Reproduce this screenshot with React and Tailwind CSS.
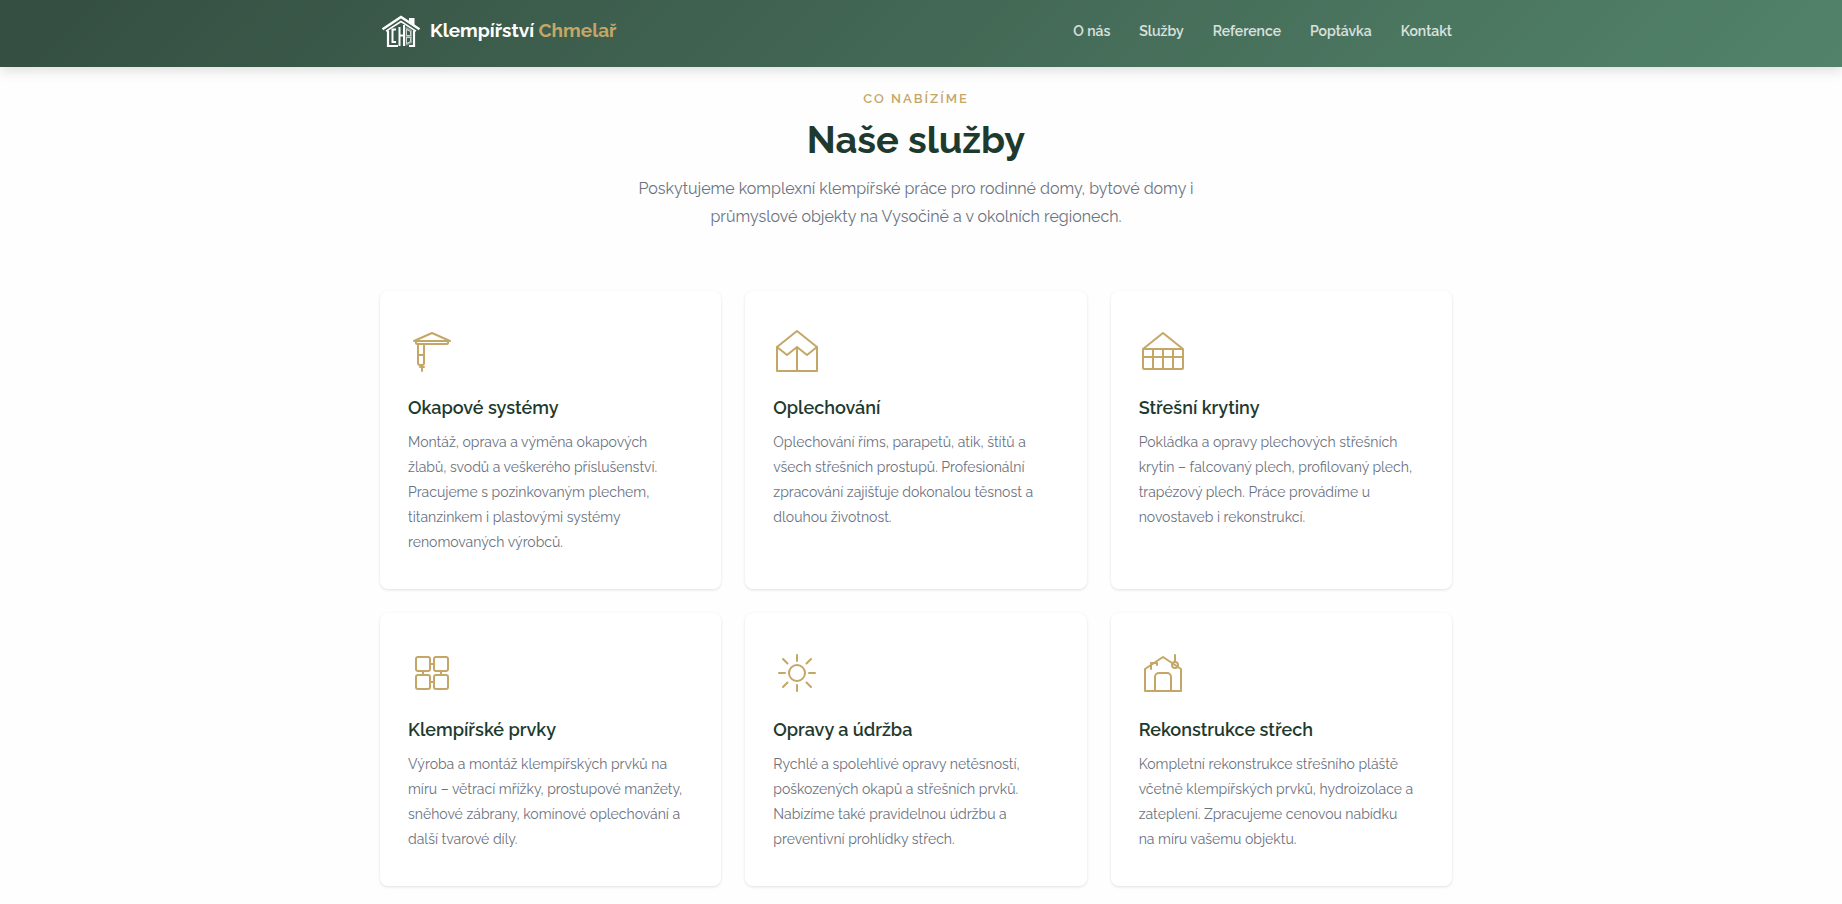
const NAV = [
  ["O nás", "#o-nas"],
  ["Služby", "#sluzby"],
  ["Reference", "#reference"],
  ["Poptávka", "#poptavka"],
  ["Kontakt", "#kontakt"],
];

const SERVICES = [
  {
    title: "Okapové systémy",
    text: "Montáž, oprava a výměna okapových žlabů, svodů a veškerého příslušenství. Pracujeme s pozinkovaným plechem, titanzinkem i plastovými systémy renomovaných výrobců.",
    icon: (
      <>
        <path d="M6 14 24 6 42 14Z" />
        <path d="M8 14v2a1 1 0 0 0 1 1h30a1 1 0 0 0 1-1v-2" />
        <path d="M10 17v19a2 2 0 0 0 2 2h2a2 2 0 0 0 2-2V17M10 28h6M14 38v6M12 40h4" />
      </>
    ),
  },
  {
    title: "Oplechování",
    text: "Oplechování říms, parapetů, atik, štítů a všech střešních prostupů. Profesionální zpracování zajišťuje dokonalou těsnost a dlouhou životnost.",
    icon: (
      <>
        <path d="M4 20 24 4 44 20V44H4Z" />
        <path d="M4 20 14 28 24 20 34 28 44 20M24 20V44" />
      </>
    ),
  },
  {
    title: "Střešní krytiny",
    text: "Pokládka a opravy plechových střešních krytin – falcovaný plech, profilovaný plech, trapézový plech. Práce provádíme u novostaveb i rekonstrukcí.",
    icon: (
      <>
        <path d="M4 22 24 6 44 22" />
        <rect x="4" y="22" width="40" height="20" rx="1" />
        <path d="M14 22v20M24 22v20M34 22v20M4 30h40" />
      </>
    ),
  },
  {
    title: "Klempířské prvky",
    text: "Výroba a montáž klempířských prvků na míru – větrací mřížky, prostupové manžety, sněhové zábrany, komínové oplechování a další tvarové díly.",
    icon: (
      <>
        <rect x="8" y="8" width="14" height="14" rx="2" />
        <rect x="26" y="8" width="14" height="14" rx="2" />
        <rect x="8" y="26" width="14" height="14" rx="2" />
        <rect x="26" y="26" width="14" height="14" rx="2" />
        <path d="M22 15h4M22 33h4M15 22v4M33 22v4" />
      </>
    ),
  },
  {
    title: "Opravy a údržba",
    text: "Rychlé a spolehlivé opravy netěsností, poškozených okapů a střešních prvků. Nabízíme také pravidelnou údržbu a preventivní prohlídky střech.",
    icon: (
      <>
        <circle cx="24" cy="24" r="8" />
        <path d="M24 6v6M24 36v6M6 24h6M36 24h6M10 10l4.500 4.500M33.500 33.500 38 38M38 10l-4.500 4.500M14.500 33.500 10 38" />
      </>
    ),
  },
  {
    title: "Rekonstrukce střech",
    text: "Kompletní rekonstrukce střešního pláště včetně klempířských prvků, hydroizolace a zateplení. Zpracujeme cenovou nabídku na míru vašemu objektu.",
    icon: (
      <>
        <path d="M6 20 24 8 42 20V42H6Z" />
        <path d="M16 42V28a4 4 0 0 1 4-4h8a4 4 0 0 1 4 4v14" />
        <path d="M12 20v-6h6v2M36 6v7" />
        <circle cx="36" cy="16" r="3" />
      </>
    ),
  },
];

function Logo() {
  return (
    <svg viewBox="0 0 42 34" className="h-[34px] w-[42px]" fill="none" stroke="#fff" aria-hidden="true">
      <path d="M29 7V4h5.500v7.500L29 8Z" fill="#fff" stroke="none" />
      <path d="M2.500 15.200 21 3 39.500 15.200" strokeWidth="2.400" />
      <path d="M6 17.200 21 7.500 36 17.200" strokeWidth="1.600" />
      <path d="M8 16.500V32H18M34 16.500V32H29" strokeWidth="2.200" />
      <path d="M16 15.500h-3.500v12.500H16" strokeWidth="2" />
      <path d="M19.500 13v19M19.500 21.500H23M24 11v21" strokeWidth="2" />
      <path d="M25.500 12.500 32 16V29L25.500 32Z" fill="#8ea398" stroke="none" />
      <path d="M26.500 15.500l4 2v4h-4ZM26.500 23.500h4v4l-4 2Z" fill="#3f5d4d" strokeWidth=".7" />
    </svg>
  );
}

function ServiceCard({ title, text, icon }) {
  return (
    <article className="rounded-lg bg-white px-7 pt-9 pb-[34px] shadow-[0_1px_3px_rgba(0,0,0,0.12)]">
      <svg
        viewBox="0 0 48 48"
        className="mb-5 size-12"
        fill="none"
        stroke="#c4a767"
        strokeWidth="2"
        strokeLinecap="round"
        strokeLinejoin="round"
        aria-hidden="true"
      >
        {icon}
      </svg>
      <h3 className="mb-[9px] text-lg leading-[26px] font-semibold text-[#1e3a2f]">{title}</h3>
      <p className="pr-2 text-sm leading-[25px] text-[#6b7280]">{text}</p>
    </article>
  );
}

export default function App() {
  return (
    <div className="min-h-screen bg-[#fefefe] font-['Raleway','Lato',sans-serif]">
      <header className="relative bg-linear-135 from-[#344e41] to-[#52836a] pr-[10px] shadow-[0_4px_12px_rgba(0,0,0,0.13)]">
        <div className="mx-auto flex h-[67px] max-w-[1120px] items-center justify-between px-6 pb-[6px]">
          <a href="#uvod" className="flex items-center gap-2 text-[19px] font-bold text-white">
            <Logo />
            <span>
              Klempířství <span className="text-[#c4a767]">Chmelař</span>
            </span>
          </a>
          <nav className="flex gap-[29px] text-sm font-semibold text-white/80">
            {NAV.map(([label, href]) => (
              <a key={href} href={href}>
                {label}
              </a>
            ))}
          </nav>
        </div>
      </header>
      <div className="pr-[10px]">
        <main className="mx-auto max-w-[1120px] px-6 pt-5 pb-4">
          <div className="mx-auto mb-[60px] max-w-[600px] text-center">
            <p className="mb-[6px] text-[13px] leading-6 font-semibold tracking-[2px] text-[#c4a767] uppercase">
              Co nabízíme
            </p>
            <h2 className="mb-[13px] text-[38px] leading-[45px] font-bold text-[#1e3a2f]">Naše služby</h2>
            <p className="text-base leading-7 text-[#6b7280]">
              Poskytujeme komplexní klempířské práce pro rodinné domy, bytové domy i průmyslové objekty na Vysočině a v
              okolních regionech.
            </p>
          </div>
          <div className="grid grid-cols-3 gap-6">
            {SERVICES.map((s) => (
              <ServiceCard key={s.title} {...s} />
            ))}
          </div>
        </main>
      </div>
    </div>
  );
}
